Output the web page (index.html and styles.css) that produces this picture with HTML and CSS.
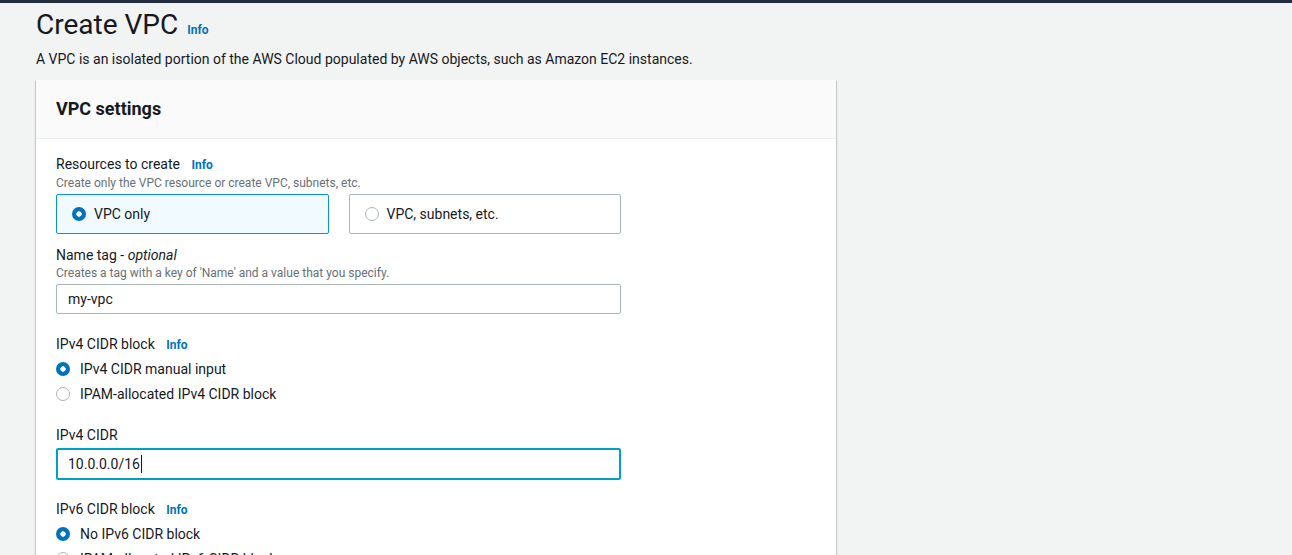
FILE: index.html
```html
<!DOCTYPE html>
<html lang="en">
<head>
<meta charset="utf-8">
<title>Create VPC</title>
<link rel="stylesheet" href="styles.css">
</head>
<body>
<div class="topbar"></div>
<main class="page">
  <header class="page-head">
    <h1 class="title">Create VPC <a class="info info-title" href="#">Info</a></h1>
    <p class="lead">A VPC is an isolated portion of the AWS Cloud populated by AWS objects, such as Amazon EC2 instances.</p>
  </header>

  <section class="panel">
    <div class="panel-head">
      <h2 class="panel-title">VPC settings</h2>
    </div>
    <div class="panel-body">
      <div class="field field-first">
        <div class="label">Resources to create <a class="info" href="#">Info</a></div>
        <div class="desc">Create only the VPC resource or create VPC, subnets, etc.</div>
        <div class="tiles">
          <div class="tile tile-selected">
            <span class="radio radio-on"></span>
            <span class="tile-text">VPC only</span>
          </div>
          <div class="tile">
            <span class="radio"></span>
            <span class="tile-text">VPC, subnets, etc.</span>
          </div>
        </div>
      </div>

      <div class="field field-tight">
        <div class="label">Name tag - <i>optional</i></div>
        <div class="desc">Creates a tag with a key of 'Name' and a value that you specify.</div>
        <div class="input">my-vpc</div>
      </div>

      <div class="field">
        <div class="label">IPv4 CIDR block <a class="info" href="#">Info</a></div>
        <div class="radio-group">
          <div class="radio-row"><span class="radio radio-on"></span><span>IPv4 CIDR manual input</span></div>
          <div class="radio-row"><span class="radio"></span><span>IPAM-allocated IPv4 CIDR block</span></div>
        </div>
      </div>

      <div class="field field-after-radios">
        <div class="label">IPv4 CIDR</div>
        <div class="input input-focus">10.0.0.0/16<span class="caret"></span></div>
      </div>

      <div class="field field-after-input">
        <div class="label">IPv6 CIDR block <a class="info" href="#">Info</a></div>
        <div class="radio-group">
          <div class="radio-row"><span class="radio radio-on"></span><span>No IPv6 CIDR block</span></div>
          <div class="radio-row"><span class="radio"></span><span>IPAM-allocated IPv6 CIDR block</span></div>
          <div class="radio-row"><span class="radio"></span><span>Amazon-provided IPv6 CIDR block</span></div>
        </div>
      </div>
    </div>
  </section>
</main>
</body>
</html>
```

FILE: styles.css
```css
* { box-sizing: border-box; }

html, body {
  margin: 0;
  padding: 0;
}

body {
  background: #f2f3f3;
  color: #16191f;
  font-family: Roboto, "Liberation Sans", sans-serif;
  font-size: 14px;
  line-height: 22px;
  overflow: hidden;
}

.topbar {
  height: 3px;
  background: #232f3e;
}

.page {
  padding: 4px 0 0 36px;
}

.page-head {
  display: flex;
  flex-direction: column;
}

.title {
  margin: 0;
  font-size: 28px;
  line-height: 36px;
  font-weight: 400;
  color: #16191f;
}

.info {
  color: #0073bb;
  font-size: 12px;
  font-weight: 700;
  text-decoration: none;
  margin-left: 8px;
}

.info-title {
  margin-left: 2px;
}

.lead {
  margin: 0;
  font-size: 14px;
  line-height: 22px;
}

.panel {
  margin-top: 10px;
  width: 800px;
  background: #fff;
  box-shadow: 0 1px 1px 0 rgba(0, 28, 36, 0.3), 1px 1px 1px 0 rgba(0, 28, 36, 0.15), -1px 1px 1px 0 rgba(0, 28, 36, 0.15);
}

.panel-head {
  background: #fafafa;
  border-bottom: 1px solid #eaeded;
  padding: 16px 20px;
}

.panel-title {
  margin: 0;
  font-size: 18px;
  line-height: 26px;
  font-weight: 700;
}

.panel-body {
  padding: 14px 20px 20px;
  display: flex;
  flex-direction: column;
  width: 605px;
}

.field {
  display: flex;
  flex-direction: column;
  margin-top: 20px;
}

.field-first {
  margin-top: 1px;
}

.field-tight {
  margin-top: 11px;
}

.field-after-radios {
  margin-top: 21px;
}

.field-after-input {
  margin-top: 19px;
}

.label {
  font-size: 14px;
  line-height: 20px;
}

.label .info {
  margin-left: 8px;
}

.desc {
  font-size: 12px;
  line-height: 16px;
  color: #687078;
}

.tiles {
  margin-top: 3px;
  display: grid;
  grid-template-columns: 1fr 1fr;
  gap: 20px;
}

.tile {
  height: 40px;
  border: 1px solid #aab7b8;
  border-radius: 2px;
  display: flex;
  align-items: center;
  gap: 8px;
  padding-left: 15px;
  background: #fff;
}

.tile-selected {
  border-color: #0a95c8;
  background: #f1faff;
}

.radio {
  flex: none;
  width: 14px;
  height: 14px;
  border-radius: 50%;
  border: 1.5px solid #aab7b8;
  background: #fff;
}

.radio-on {
  border: none;
  background: radial-gradient(circle, #fff 0 2.4px, #0073bb 3px);
}

.radio-group {
  margin-top: 4px;
  display: flex;
  flex-direction: column;
  gap: 5px;
}

.radio-row {
  display: flex;
  align-items: center;
  gap: 10px;
  line-height: 20px;
}

.input {
  margin-top: 3px;
  height: 30px;
  border: 1px solid #aab7b8;
  border-radius: 2px;
  padding: 0 11px;
  display: flex;
  align-items: center;
  background: #fff;
}

.input-focus {
  border: 2px solid #00a1c9;
  padding: 0 10px;
  height: 32px;
}

.caret {
  width: 1px;
  height: 18px;
  background: #16191f;
  margin-left: 1px;
}
```
